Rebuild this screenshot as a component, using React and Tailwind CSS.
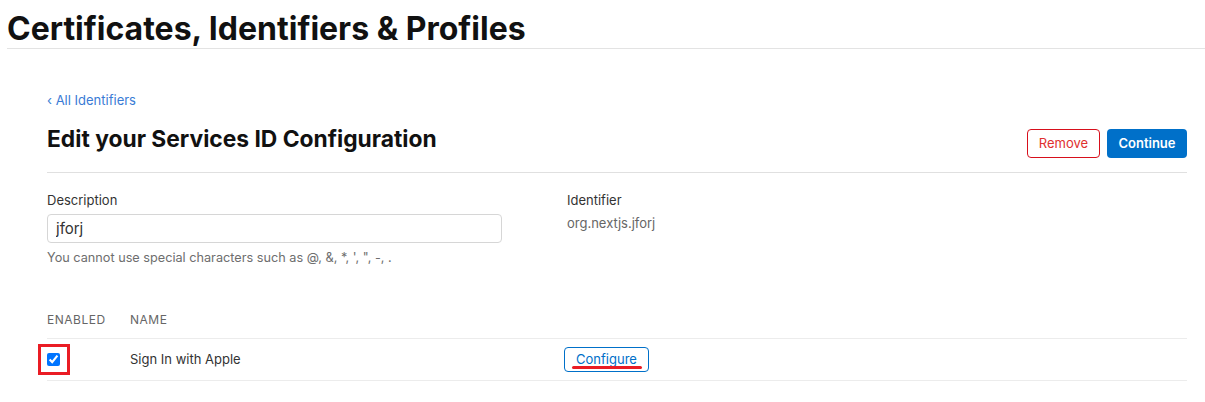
export default function App() {
  return (
    <div className="min-h-screen w-[1205px] bg-white text-[#333333]" style={{ fontFamily: "Inter, 'Liberation Sans', sans-serif" }}>
      {/* Page header */}
      <h1 className="ml-[7px] pt-[9px] text-[32px] leading-[39px] font-bold text-[#111111] border-b border-[#e3e3e3]">
        Certificates, Identifiers &amp; Profiles
      </h1>

      <div className="ml-[47px] w-[1140px]">
        <a href="#" className="mt-[42px] block text-[13px] leading-[18px] text-[#3a7bd5]">
          ‹ All Identifiers
        </a>

        {/* Title row */}
        <div className="mt-[16px] flex items-start justify-between border-b border-[#e0e0e0] pb-[14px]">
          <h2 className="text-[22.8px] leading-[28px] font-bold text-[#111111]">
            Edit your Services ID Configuration
          </h2>
          <div className="mt-[4px] flex gap-[7px]">
            <button className="h-[29px] w-[73px] rounded-[4px] border border-[#d70f1c] text-[13px] text-[#e0302f]">
              Remove
            </button>
            <button className="h-[29px] w-[80px] rounded-[4px] bg-[#0070c9] text-[13px] font-semibold text-white">
              Continue
            </button>
          </div>
        </div>

        {/* Form fields */}
        <div className="mt-[18px] grid grid-cols-[520px_1fr]">
          <div>
            <div className="text-[13px] leading-[18px] text-[#333333]">Description</div>
            <input
              readOnly
              value="jforj"
              className="mt-[5px] block h-[29px] w-[455px] rounded-[4px] border border-[#d6d6d6] px-[8px] text-[15px] text-[#333333] outline-none"
            />
            <div className="mt-[7px] text-[12.7px] leading-[16px] text-[#6e6e6e]">
              You cannot use special characters such as @, &amp;, *, ', ", -, .
            </div>
          </div>
          <div>
            <div className="text-[13px] leading-[18px] text-[#333333]">Identifier</div>
            <div className="mt-[5px] text-[13px] leading-[18px] text-[#666666]">org.nextjs.jforj</div>
          </div>
        </div>

        {/* Capabilities table */}
        <div className="mt-[46px]">
          <div className="flex border-b border-[#ececec] pb-[10px] text-[12px] leading-[16px] text-[#666666] tracking-[0.5px]">
            <div className="w-[83px]">ENABLED</div>
            <div>NAME</div>
          </div>
          <div className="flex h-[42px] items-center border-b border-[#ececec]">
            <div className="w-[83px]">
              <span className="relative block h-[13px] w-[13px]">
                <input type="checkbox" checked readOnly className="m-0 block h-[13px] w-[13px] accent-[#0075ff]" />
                <span className="pointer-events-none absolute -top-[9px] -bottom-[9px] -left-[9px] -right-[10px] border-[3px] border-[#ea1c24]" />
              </span>
            </div>
            <div className="w-[434px] text-[13px] text-[#333333]">Sign In with Apple</div>
            <button className="relative h-[25px] w-[85px] rounded-[4px] border border-[#0070c9] text-[13px] text-[#0070c9]">
              Configure
              <span className="pointer-events-none absolute left-[7px] right-[6px] bottom-[2px] h-[3px] rounded-full bg-[#ea1c24]" />
            </button>
          </div>
        </div>
      </div>
    </div>
  );
}
